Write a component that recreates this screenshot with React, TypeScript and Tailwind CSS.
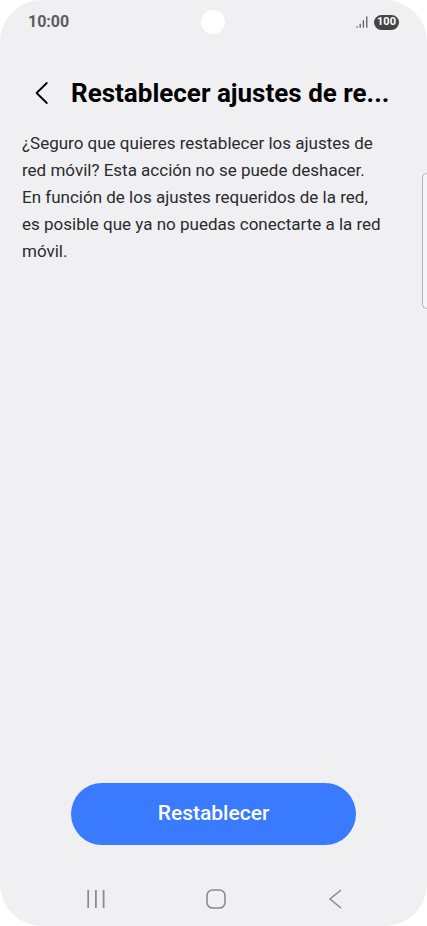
import React from 'react';

const TITLE = 'Restablecer ajustes de re...';

const PARAGRAPHS = [
  '¿Seguro que quieres restablecer los ajustes de red móvil? Esta acción no se puede deshacer.',
  'En función de los ajustes requeridos de la red, es posible que ya no puedas conectarte a la red móvil.',
];

const StatusBar: React.FC = () => (
  <div className="grid h-11 grid-cols-3 items-center px-7 text-[#5c5c5e]">
    <span className="text-base font-bold">10:00</span>
    <span className="size-6 justify-self-center rounded-full bg-white" />
    <div className="flex items-center justify-end gap-1.5">
      <svg className="h-3 w-3" viewBox="0 0 12 12" stroke="currentColor" strokeWidth="1.3" strokeLinecap="round" fill="none">
        <path d="M1 11.2V10.6M4.2 11.2V8.2M7.4 11.2V4.6M10.8 11.2V1" />
      </svg>
      <span className="flex h-[15px] w-[25px] items-center justify-center rounded-full bg-[#454547] text-[11px] leading-4 font-bold text-white">
        100
      </span>
    </div>
  </div>
);

const Header: React.FC = () => (
  <header className="flex h-[86px] items-center pt-3 pr-8 pl-7">
    <button type="button" aria-label="Atrás" className="flex h-11 w-7 items-center justify-center text-black">
      <svg className="h-6 w-3.5" viewBox="0 0 14 24" fill="none" stroke="currentColor" strokeWidth="1.8" strokeLinecap="round" strokeLinejoin="round">
        <path d="M11.8 2L1.6 12L11.8 22" />
      </svg>
    </button>
    <h1 className="ml-[15px] truncate text-[26px] leading-9 font-bold text-black">{TITLE}</h1>
  </header>
);

const NavigationBar: React.FC = () => (
  <nav className="flex h-[54px] items-center justify-between pr-20 pl-[84px] text-[#8c8c8e]">
    <button type="button" aria-label="Recientes" className="flex size-6 items-center justify-center">
      <svg className="h-5 w-5" viewBox="0 0 20 20" fill="none" stroke="currentColor" strokeWidth="1.8">
        <path d="M2.2 1V19M9.9 1V19M17.6 1V19" />
      </svg>
    </button>
    <button type="button" aria-label="Inicio" className="flex size-6 items-center justify-center">
      <svg className="h-5 w-5" viewBox="0 0 20 20" fill="none" stroke="currentColor" strokeWidth="1.6">
        <rect x="1" y="1" width="18" height="18" rx="5.5" />
      </svg>
    </button>
    <button type="button" aria-label="Volver" className="flex size-6 items-center justify-center">
      <svg className="h-5 w-3.5" viewBox="0 0 14 20" fill="none" stroke="currentColor" strokeWidth="1.6">
        <path d="M13 1L2 10L13 19" />
      </svg>
    </button>
  </nav>
);

const App: React.FC = () => {
  return (
    <div className="min-h-screen bg-white font-['Roboto',sans-serif]">
      <div className="relative flex min-h-screen flex-col overflow-hidden rounded-[42px] bg-[#f0f0f3]">
        <StatusBar />
        <Header />

        <main className="flex flex-1 flex-col pb-[27px]">
          <div className="pr-11 pl-[22px] text-[17px] leading-[27px] text-[#2b2b2d]">
            {PARAGRAPHS.map((text) => (
              <p key={text}>{text}</p>
            ))}
          </div>
          <button
            type="button"
            className="mx-[71px] mt-auto h-[62px] rounded-full bg-[#397aff] text-[21px] font-medium text-white"
          >
            Restablecer
          </button>
        </main>

        <NavigationBar />

        {/* Edge panel handle */}
        <div className="absolute top-[173px] right-0 h-[136px] w-[5px] rounded-l-md border border-r-0 border-[#b4b4b6] bg-[#f7f7f9]" />
      </div>
    </div>
  );
};

export default App;
